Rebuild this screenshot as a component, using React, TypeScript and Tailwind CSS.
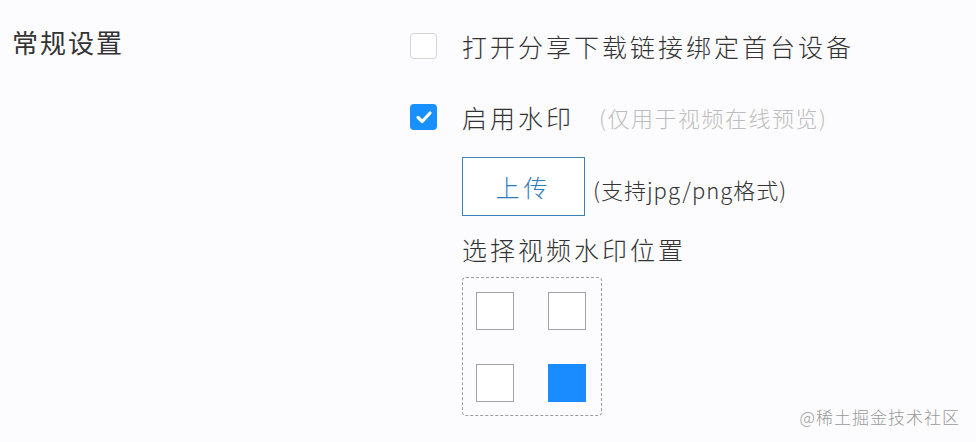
const cjk = "font-['Microsoft_YaHei','Noto_Sans_CJK_SC',sans-serif]";

const Checkbox = ({ checked = false }: { checked?: boolean }) =>
  checked ? (
    <span className="flex h-[26px] w-[27px] shrink-0 items-center justify-center rounded-[4px] bg-[#1890ff]">
      <svg width="20" height="20" viewBox="0 0 20 20" fill="none">
        <path d="M4 10.5 L8.3 14.5 L16 6" stroke="#fff" strokeWidth="3.2" strokeLinecap="round" strokeLinejoin="round" />
      </svg>
    </span>
  ) : (
    <span className="block h-[26px] w-[27px] shrink-0 rounded-[4px] border border-[#d4d4d4] bg-white" />
  );

const PositionPicker = ({ selected }: { selected: number }) => (
  <div className="grid h-[139px] w-[140px] grid-cols-[38px_38px] content-start gap-x-[34px] gap-y-[34px] rounded-[4px] border border-dashed border-[#9c9c9c] pl-[13px] pt-[14px]">
    {[0, 1, 2, 3].map((i) => (
      <div
        key={i}
        className={
          i === selected
            ? "h-[38px] w-[38px] bg-[#1a8cff]"
            : "h-[38px] w-[38px] border border-[#a3a3a3] bg-white"
        }
      />
    ))}
  </div>
);

export default function App() {
  return (
    <div className={`relative flex h-[442px] w-[976px] overflow-hidden bg-[#fcfcfe] font-light text-[#333] ${cjk}`}>
      <div className="w-[410px] shrink-0 pl-[12px]">
        <div className="mt-[25px] h-[34px] text-[26px] font-normal leading-[34px] tracking-[2px]">常规设置</div>
      </div>

      <div className="flex flex-col">
        <div className="mt-[33px] flex h-[26px] items-center gap-[25px]">
          <Checkbox />
          <span className="text-[25px] leading-[26px] tracking-[3px]">打开分享下载链接绑定首台设备</span>
        </div>

        <div className="mt-[45px] flex h-[26px] items-center gap-[25px]">
          <Checkbox checked />
          <span className="text-[25px] leading-[26px] tracking-[3px]">启用水印</span>
          <span className="text-[22px] leading-[26px] tracking-[1.5px] text-[#bdbdbd]">(仅用于视频在线预览)</span>
        </div>

        <div className="flex flex-col pl-[52px]">
          <div className="mt-[27px] flex items-center">
            <button className="h-[59px] w-[123px] border border-[#3a82b9] bg-white text-[24px] tracking-[4px] text-[#2b7cc0]">
              上传
            </button>
            <span className="ml-[8px] mt-[6px] text-[22px] tracking-[1px]">(支持jpg/png格式)</span>
          </div>

          <div className="mt-[18px] h-[30px] text-[25px] leading-[30px] tracking-[3px]">选择视频水印位置</div>

          <div className="mt-[13px]">
            <PositionPicker selected={3} />
          </div>
        </div>
      </div>

      <div className="absolute bottom-[15px] right-[16px] text-[17px] leading-[20px] tracking-[1px] text-[#9a9a9a]">
        @稀土掘金技术社区
      </div>
    </div>
  );
}
